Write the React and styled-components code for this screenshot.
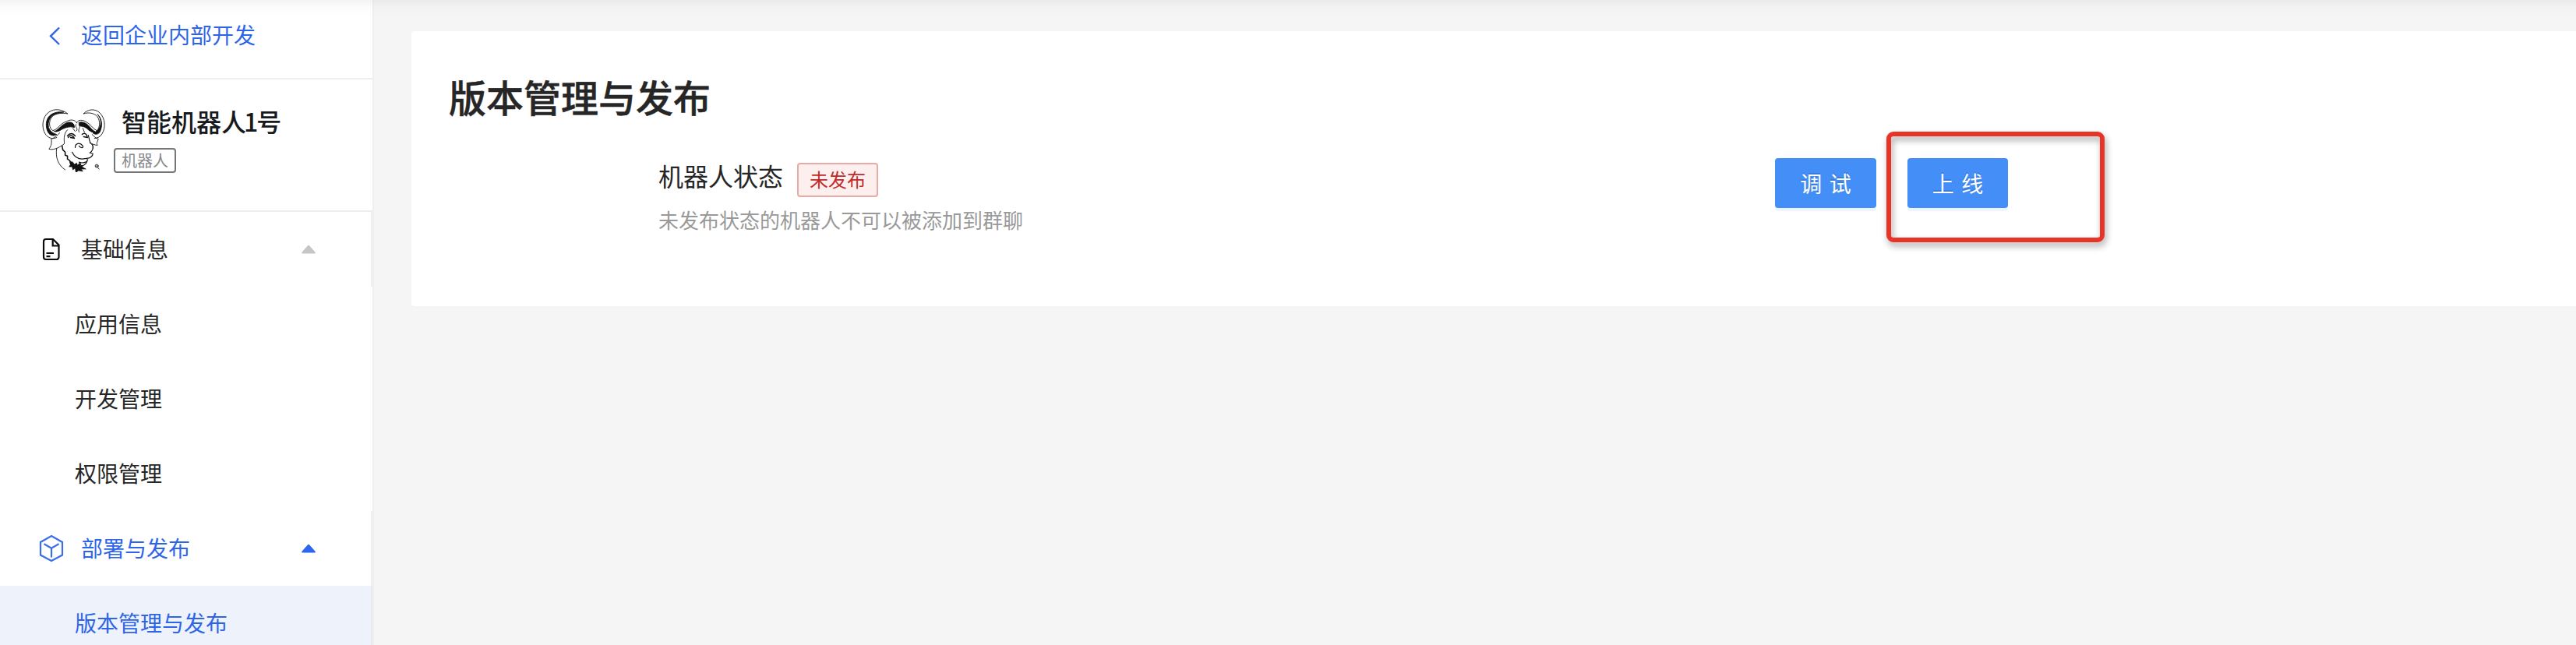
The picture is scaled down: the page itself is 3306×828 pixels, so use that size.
import React from 'react';
import styled, { createGlobalStyle, css } from 'styled-components';

const Global = createGlobalStyle`
  * { box-sizing: border-box; }
  html, body { margin: 0; padding: 0; }
  body {
    background: #f5f5f5;
    font-family: "Noto Sans CJK SC", "Liberation Sans", sans-serif;
    color: #262626;
    overflow: hidden;
  }
`;

const Page = styled.div`
  position: relative;
  display: flex;
  width: 100%;
  height: 828px;
  overflow: hidden;
`;

const TopShadow = styled.div`
  position: absolute;
  top: 0;
  left: 0;
  right: 0;
  height: 20px;
  background: linear-gradient(rgba(0, 0, 0, 0.045), rgba(0, 0, 0, 0.014) 45%, rgba(0, 0, 0, 0));
  pointer-events: none;
`;

const Sidebar = styled.aside`
  flex: none;
  width: 480px;
  background: #fff;
  border-right: 2px solid #f0f0f0;
`;

const BackLink = styled.a`
  display: flex;
  align-items: center;
  height: 102px;
  padding: 0 0 10px 62px;
  border-bottom: 2px solid #eee;
  color: #2e65e8;
  font-size: 28px;
  line-height: 40px;
  svg { margin: 2px 26px 0 0; }
`;

const AppSummary = styled.section`
  display: flex;
  height: 170px;
  padding: 35px 0 0 52px;
  border-bottom: 2px solid #eee;
`;

const AppMeta = styled.div`
  display: flex;
  flex-direction: column;
  align-items: flex-start;
  padding-left: 10px;
`;

const AppName = styled.div`
  margin: -3px 0 0 10px;
  font-size: 32px;
  line-height: 42px;
  font-weight: 500;
  color: #171a1d;
  white-space: nowrap;
`;

const Digit = styled.span`
  margin: 0 -2px 0 -3px;
`;

const AppTag = styled.span`
  display: flex;
  align-items: center;
  justify-content: center;
  width: 80px;
  height: 32px;
  margin-top: 14px;
  border: 2px solid #747677;
  border-radius: 4px;
  font-size: 20px;
  line-height: 28px;
  color: #86888a;
`;

const MenuHeader = styled.div`
  display: flex;
  align-items: center;
  height: 96px;
  padding-left: 48px;
  border-right: 2px solid #eee;
  font-size: 28px;
  line-height: 40px;
  color: ${(p) => (p.$active ? '#2e65e8' : '#262626')};
`;

const MenuIcon = styled.span`
  display: flex;
  justify-content: center;
  width: 36px;
  margin-right: 20px;
`;

const MenuLabel = styled.span`
  margin-bottom: 3px;
`;

const Caret = styled.svg`
  margin-left: auto;
  margin-right: 71px;
  fill: ${(p) => (p.$active ? '#2e65f2' : '#c5c6c8')};
  stroke: ${(p) => (p.$active ? '#2e65f2' : '#c5c6c8')};
`;

const MenuItem = styled.div`
  display: flex;
  align-items: center;
  height: 96px;
  padding: 0 0 3px 96px;
  font-size: 28px;
  line-height: 40px;
  ${(p) =>
    p.$selected &&
    css`
      color: #2e65e8;
      background: #edf2fb;
      border-right: 2px solid #e6eaf2;
    `}
`;

const Main = styled.main`
  flex: 1;
  min-width: 0;
  padding: 40px 0 0 48px;
`;

const Card = styled.section`
  height: 353px;
  padding: 47px 0 0 48px;
  background: #fff;
  border-radius: 4px 0 0 4px;
`;

const Title = styled.h1`
  margin: 0 0 3px;
  font-size: 48px;
  line-height: 72px;
  font-weight: 500;
  -webkit-text-stroke: 0.5px currentColor;
`;

const StatusRow = styled.div`
  display: flex;
  align-items: flex-start;
  padding-left: 269px;
`;

const StatusInfo = styled.div`
  width: 1433px;
  padding-top: 41px;
`;

const StatusLine = styled.div`
  display: flex;
  align-items: flex-start;
  height: 55px;
  font-size: 32px;
  line-height: 44px;
`;

const StatusTag = styled.span`
  display: flex;
  align-items: center;
  justify-content: center;
  width: 104px;
  height: 44px;
  margin: 6px 0 0 18px;
  padding-bottom: 3px;
  border: 2px solid #e6aaa7;
  border-radius: 4px;
  background: #fdefee;
  color: #bf2c2c;
  font-size: 24px;
  line-height: 37px;
`;

const Description = styled.p`
  margin: 4px 0 0;
  font-size: 26px;
  line-height: 40px;
  color: #999;
`;

const Actions = styled.div`
  position: relative;
  display: flex;
  gap: 40px;
  padding-top: 41px;
`;

const Button = styled.button`
  width: ${(p) => p.$width}px;
  height: 64px;
  padding: 0;
  border: 0;
  border-radius: 4px;
  background: #448ef7;
  box-shadow: 0 4px 0 rgba(68, 142, 247, 0.09);
  color: #fff;
  font-family: inherit;
  font-size: 28px;
  line-height: 63px;
  word-spacing: 3px;
  text-shadow: 0 -2px 0 rgba(0, 0, 0, 0.12);
`;

const Highlight = styled.div`
  position: absolute;
  top: 7px;
  left: 143px;
  width: 280px;
  height: 142px;
  border: 6px solid #e83426;
  border-radius: 9px;
  filter: drop-shadow(2px 5px 4px rgba(0, 0, 0, 0.35));
  pointer-events: none;
`;

const FileIcon = () => (
  <svg width="24" height="30" viewBox="0 0 24 30" fill="none" stroke="#0c0c0c" strokeWidth="2.2">
    <path d="M5 2H14L21.500 9.500V25a3 3 0 0 1-3 3H5a3 3 0 0 1-3-3V5a3 3 0 0 1 3-3Z" />
    <path d="M13.700 2V10.500H21.500M5.500 20h9.500M5.500 24.200h5" />
  </svg>
);

const CubeIcon = () => (
  <svg width="32" height="36" viewBox="0 0 32 36" fill="none" stroke="#3a6fea" strokeWidth="2.200">
    <path d="M16 2 30 10V26.500L16 34 2 26.500V10Z" />
    <path d="M6.500 12.300 16 17.800 25.500 12.300M16 17.800V29.500" />
  </svg>
);

const CaretUp = ({ active }) => (
  <Caret $active={active} width="18" height="12" viewBox="0 0 18 12" strokeWidth="2" strokeLinejoin="round">
    <path d="M9 1.700 16.800 10.400H1.200Z" />
  </Caret>
);

const Gnu = () => (
  <svg width="84" height="84" viewBox="-1 -1 85 85" fill="none" stroke="#111" strokeWidth="0.900" strokeLinecap="round" strokeLinejoin="round">
    <path d="M34 8C27 2 17 1 10 6C1 12 0 26 5 34C8 39 14 42 20 39M34 8C28 7 19 7 14 12C9 18 10 27 15 30C21 29 24 21 33 18C39 15 44 16 46 20" />
    <path d="M29 6C21 5 13 7 9 13C5 19 6 29 10 34C13 37 17 37 20 35C16 34 11 31 9.500 26C8 19 11 11 18 8.500C22 7 26 7 29 6Z" fill="#111" />
    <path d="M17 31C22 30 26 22 34 19.500C39 18.500 43 20 43 26C36 23.500 29 27 24 30C21 31 19 32 17 31Z" fill="#111" />
    <path d="M55 8C60 2 70 1 76 7C83 14 84 26 79 34C77 38 73 40 69 40M55 8C61 6 69 7 73 12C77 18 76 27 72 30C67 28 64 21 57 18C51 15 47 17 46 20" />
    <path d="M73 9C79 14 80 24 76 32C73 36 69 35 67 33C72 32 76 27 77 22C78 17 76 12 73 9Z" fill="#111" />
    <path d="M49 19.500C54 17.500 60 21 64 26.500C67 30 70 31 71 32.500C66 33 62 30 59 27C56 24.500 52 24.500 50 24Z" fill="#111" />
    <path d="M24 33C18 39 15 40 13 41C14 48 12 51 10 54C17 56 25 51 30 47M66 35C69 38 71 40 74 41C73 45 71 46 73 49C69 49 66 47 63 46M20 53C18 65 22 75 31 81" />
    <path d="M34 29C30 33 29 39 30 46M45 22C43 26 48 26 46 30M49 22C52 27 47 27 49 32M41 27L44 31M54 27L56 32" />
    <path d="M34 37C37 33 41 33 44 37M35 39C37 35 41 36 43 40L38 39M53 35C56 32 59 34 60 39L55 38" strokeWidth="1.500" />
    <path d="M61 36C63 42 62 46 66 48C69 52 66 57 63 59L67 60C67 64 62 66 60 66C60 72 57 75 52 76L50 72M44 52C44 46 50 45 54 50C55 53 51 53 49 50M40 58C43 64 48 67 53 67L61 66M49 71C53 73 59 71 60 69" strokeWidth="1.200" />
    <path d="M27 50L28 55L31 58L31 62L34 63L34 67L37 69L38 73L41 74" strokeWidth="1.600" />
    <path d="M37 70L38 74L36 77L40 77L41 81L44 79L45 85L48 82L54 83L52 80L58 80L53 77L55 75L51 76L50 72L47 75L46 72L43 74L41 71Z" fill="#111" strokeWidth=".600" />
    <circle cx="72" cy="76" r="2" />
    <path d="M73.500 78 75 80M71.300 76h1.400" />
  </svg>
);

export default function App() {
  return (
    <Page>
      <Global />
      <Sidebar>
        <BackLink>
          <svg width="16" height="24" viewBox="0 0 16 24" fill="none" stroke="currentColor" strokeWidth="2.400">
            <path d="M14 1.500 3 12.300 14 23" />
          </svg>
          <MenuLabel>返回企业内部开发</MenuLabel>
        </BackLink>
        <AppSummary>
          <Gnu />
          <AppMeta>
            <AppName>
              智能机器人<Digit>1</Digit>号
            </AppName>
            <AppTag>机器人</AppTag>
          </AppMeta>
        </AppSummary>
        <MenuHeader>
          <MenuIcon><FileIcon /></MenuIcon>
          <MenuLabel>基础信息</MenuLabel>
          <CaretUp />
        </MenuHeader>
        <MenuItem>应用信息</MenuItem>
        <MenuItem>开发管理</MenuItem>
        <MenuItem>权限管理</MenuItem>
        <MenuHeader $active>
          <MenuIcon><CubeIcon /></MenuIcon>
          <MenuLabel>部署与发布</MenuLabel>
          <CaretUp active />
        </MenuHeader>
        <MenuItem $selected>版本管理与发布</MenuItem>
      </Sidebar>
      <Main>
        <Card>
          <Title>版本管理与发布</Title>
          <StatusRow>
            <StatusInfo>
              <StatusLine>
                机器人状态
                <StatusTag>未发布</StatusTag>
              </StatusLine>
              <Description>未发布状态的机器人不可以被添加到群聊</Description>
            </StatusInfo>
            <Actions>
              <Button $width={130}>调 试</Button>
              <Button $width={129}>上 线</Button>
              <Highlight />
            </Actions>
          </StatusRow>
        </Card>
      </Main>
      <TopShadow />
    </Page>
  );
}
